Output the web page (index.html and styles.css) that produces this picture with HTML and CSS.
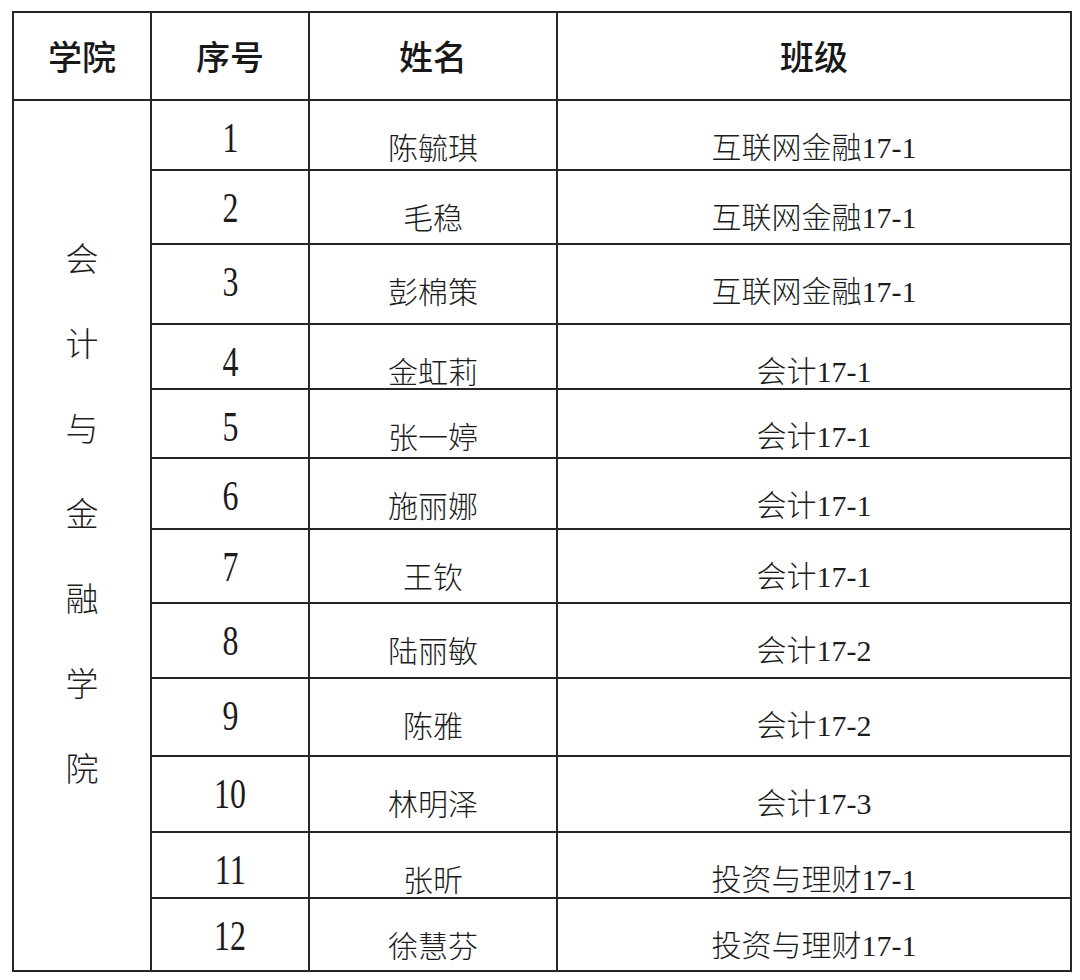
FILE: index.html
```html
<!DOCTYPE html>
<html lang="zh-CN">
<head>
<meta charset="utf-8">
<title>名单</title>
<link rel="stylesheet" href="styles.css">
</head>
<body>
<table class="roster">
  <colgroup>
    <col class="c-college"><col class="c-no"><col class="c-name"><col class="c-class">
  </colgroup>
  <thead>
    <tr class="head"><th>学院</th><th>序号</th><th>姓名</th><th>班级</th></tr>
  </thead>
  <tbody>
    <tr class="r1"><td class="college" rowspan="12"><div class="vtext">会计与金融学院</div></td><td class="no"><span class="num">1</span></td><td class="name">陈毓琪</td><td class="cls">互联网金融<span class="code">17-1</span></td></tr>
    <tr class="r2"><td class="no"><span class="num">2</span></td><td class="name">毛稳</td><td class="cls">互联网金融<span class="code">17-1</span></td></tr>
    <tr class="r3"><td class="no"><span class="num">3</span></td><td class="name">彭棉策</td><td class="cls">互联网金融<span class="code">17-1</span></td></tr>
    <tr class="r4"><td class="no"><span class="num">4</span></td><td class="name">金虹莉</td><td class="cls">会计<span class="code">17-1</span></td></tr>
    <tr class="r5"><td class="no"><span class="num">5</span></td><td class="name">张一婷</td><td class="cls">会计<span class="code">17-1</span></td></tr>
    <tr class="r6"><td class="no"><span class="num">6</span></td><td class="name">施丽娜</td><td class="cls">会计<span class="code">17-1</span></td></tr>
    <tr class="r7"><td class="no"><span class="num">7</span></td><td class="name">王钦</td><td class="cls">会计<span class="code">17-1</span></td></tr>
    <tr class="r8"><td class="no"><span class="num">8</span></td><td class="name">陆丽敏</td><td class="cls">会计<span class="code">17-2</span></td></tr>
    <tr class="r9"><td class="no"><span class="num">9</span></td><td class="name">陈雅</td><td class="cls">会计<span class="code">17-2</span></td></tr>
    <tr class="r10"><td class="no"><span class="num">10</span></td><td class="name">林明泽</td><td class="cls">会计<span class="code">17-3</span></td></tr>
    <tr class="r11"><td class="no"><span class="num">11</span></td><td class="name">张昕</td><td class="cls">投资与理财<span class="code">17-1</span></td></tr>
    <tr class="r12"><td class="no"><span class="num">12</span></td><td class="name">徐慧芬</td><td class="cls">投资与理财<span class="code">17-1</span></td></tr>
  </tbody>
</table>
</body>
</html>
```
FILE: styles.css
```css
html, body {
  margin: 0;
  padding: 0;
  background: #ffffff;
}

body {
  padding: 11px 0 0 12px;
  color: #1c1c1c;
  font-family: "Liberation Serif", "Noto Sans CJK SC", serif;
}

.roster {
  border-collapse: collapse;
  table-layout: fixed;
  width: 1060px;
}

.c-college { width: 138px; }
.c-no { width: 158px; }
.c-name { width: 248px; }
.c-class { width: 514px; }

.roster th,
.roster td {
  border: 2px solid #262626;
  padding: 0;
  text-align: center;
  vertical-align: top;
  white-space: nowrap;
}

.roster th {
  font-family: "Noto Sans CJK SC", sans-serif;
  font-weight: 500;
  font-size: 34px;
  line-height: 34px;
  vertical-align: middle;
  color: #181818;
}

.head { height: 88px; }

.roster td.no {
  font-family: "Liberation Serif", serif;
  font-size: 42px;
  line-height: 42px;
  padding-top: 16px;
}

.num {
  display: inline-block;
  transform: scaleX(0.76);
}

.roster td.name,
.roster td.cls {
  font-family: "Noto Sans CJK SC", sans-serif;
  font-size: 30px;
  line-height: 30px;
  padding-top: 30px;
  font-weight: 300;
}

.roster td.cls {
  padding-top: 29px;
}

.code {
  font-family: "Liberation Serif", serif;
  font-weight: 400;
}

.roster td.college {
  padding-top: 114px;
  font-family: "Noto Sans CJK SC", sans-serif;
  font-weight: 300;
  font-size: 33px;
}

.vtext {
  width: 1em;
  margin: 0 auto;
  line-height: 85px;
  white-space: normal;
  word-break: break-all;
}

.r1 { height: 70px; }
.r2 { height: 74px; }
.r3 { height: 80px; }
.r4 { height: 65px; }
.r5 { height: 69px; }
.r6 { height: 71px; }
.r7 { height: 74px; }
.r8 { height: 75px; }
.r9 { height: 78px; }
.r10 { height: 76px; }
.r11 { height: 66px; }
.r12 { height: 73px; }
```
